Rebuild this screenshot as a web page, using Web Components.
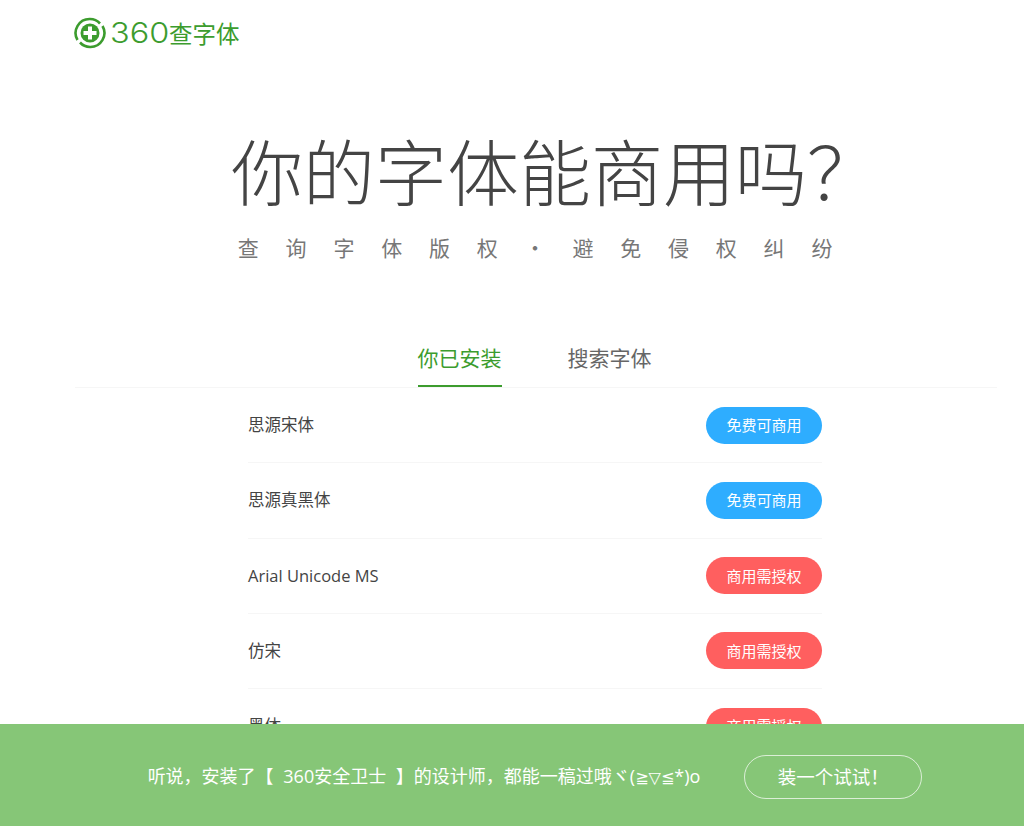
<!DOCTYPE html>
<html lang="zh">
<head>
<meta charset="utf-8">
<title>360查字体</title>
<style>
  html, body { margin: 0; height: 100%; overflow: hidden; background: #fff; }
  body { font-family: "Noto Sans CJK SC", "Liberation Sans", sans-serif; }
</style>
</head>
<body>
<font-app></font-app>

<script>
const FONT = `"Noto Sans CJK SC", "Liberation Sans", sans-serif`
const LATIN_FONT = `"Open Sans", ${FONT}`

class FontLogo extends HTMLElement {
  constructor() {
    super()
    this.attachShadow({ mode: 'open' }).innerHTML = `
      <style>
        :host { display: flex; align-items: center; color: #3c9c2e; height: 30px; }
        svg { width: 32px; height: 32px; flex: none; margin-right: 4px; }
        /* digits are wide in the logo, no installed font has them so stretch */
        .num { display: inline-block; width: 59px; font: 300 28px/30px Inter, sans-serif; transform: scaleX(1.160); transform-origin: left center; }
        .cn { font: 400 23.500px/30px ${FONT}; }
      </style>
      <svg viewBox="0 0 32 32">
        <path d="M3.500 23A14 14 0 0 1 16 2A14 14 0 0 1 26 6.500" fill="none" stroke="#3c9c2e" stroke-width="2.600"/>
        <path d="M28.500 9A14 14 0 0 1 16 30A14 14 0 0 1 6 25.500" fill="none" stroke="#3c9c2e" stroke-width="2.600"/>
        <circle cx="16" cy="16" r="9.500" fill="#3c9c2e"/>
        <path d="M14 9.500h4v4.500h4.500v4h-4.500v4.500h-4v-4.500h-4.500v-4h4.500z" fill="#fff"/>
      </svg>
      <span class="num">360</span><span class="cn">查字体</span>`
  }
}

class FontHero extends HTMLElement {
  constructor() {
    super()
    this.attachShadow({ mode: 'open' }).innerHTML = `
      <style>
        :host { display: flex; flex-direction: column; align-items: center; }
        h1 { margin: 0 0 0 86px; font: 300 72px/84px ${FONT}; color: #444; white-space: nowrap; }
        p { margin: 21px -27px 0 46px; font: 400 21px/30px ${FONT}; color: #777; letter-spacing: 26.800px; white-space: nowrap; }
      </style>
      <h1><slot name="title"></slot></h1>
      <p><slot name="sub"></slot></p>`
  }
}

class FontTabs extends HTMLElement {
  constructor() {
    super()
    this.attachShadow({ mode: 'open' }).innerHTML = `
      <style>
        :host { display: flex; justify-content: center; gap: 66px; margin: 0 27px 0 75px; padding-right: 3px; border-bottom: 1px solid #f6f6f6; }
      </style>
      <slot></slot>`
  }
}

class FontTab extends HTMLElement {
  constructor() {
    super()
    this.attachShadow({ mode: 'open' }).innerHTML = `
      <style>
        :host { display: block; font: 400 21px/30px ${FONT}; color: #666; padding: 0 0 13px; border-bottom: 2px solid transparent; }
        :host([active]) { color: #3c9c2e; border-bottom-color: #3c9c2e; }
      </style>
      <slot></slot>`
  }
}

class FontRow extends HTMLElement {
  constructor() {
    super()
    const free = this.getAttribute('status') === 'free'
    this.attachShadow({ mode: 'open' }).innerHTML = `
      <style>
        :host { display: flex; justify-content: space-between; align-items: center; height: 74.250px; border-bottom: 1px solid #f6f6f6; font: 400 16.500px/24px ${LATIN_FONT}; color: #444; }
        .pill { width: 116px; height: 37px; border-radius: 19px; display: flex; align-items: center; justify-content: center; font: 400 15px/24px ${FONT}; color: #fff; background: ${free ? '#2eadff' : '#ff5f5f'}; }
      </style>
      <span><slot></slot></span>
      <span class="pill">${free ? '免费可商用' : '商用需授权'}</span>`
  }
}

class FontBar extends HTMLElement {
  constructor() {
    super()
    this.attachShadow({ mode: 'open' }).innerHTML = `
      <style>
        :host { position: absolute; left: 0; right: 0; bottom: 0; height: 102px; box-sizing: border-box; padding: 4px 0 0 46px; background: #86c677; display: flex; align-items: center; justify-content: center; gap: 44px; color: #fff; font: 400 18px/26px ${LATIN_FONT}; word-spacing: 5px; }
        .btn { width: 176px; height: 42px; border: 1px solid rgba(255,255,255,.7); border-radius: 22px; display: flex; align-items: center; justify-content: center; }
      </style>
      <span><slot></slot></span>
      <span class="btn"><slot name="action"></slot></span>`
  }
}

class FontApp extends HTMLElement {
  constructor() {
    super()
    this.attachShadow({ mode: 'open' }).innerHTML = `
      <style>
        :host { display: block; height: 826px; overflow: hidden; position: relative; }
        header { padding: 18px 0 0 74px; }
        font-hero { margin-top: 79px; }
        font-tabs { margin-top: 80px; }
        .list { width: 574px; margin: 0 0 0 248px; }
        .kao { font-family: "DejaVu Sans", sans-serif; font-size: 16px; }
        .action { font-size: 18.500px; }
      </style>
      <header><font-logo></font-logo></header>
      <font-hero>
        <span slot="title">你的字体能商用吗？</span>
        <span slot="sub">查询字体版权·避免侵权纠纷</span>
      </font-hero>
      <font-tabs>
        <font-tab active>你已安装</font-tab>
        <font-tab>搜索字体</font-tab>
      </font-tabs>
      <div class="list">
        <font-row status="free">思源宋体</font-row>
        <font-row status="free">思源真黑体</font-row>
        <font-row status="paid">Arial Unicode MS</font-row>
        <font-row status="paid">仿宋</font-row>
        <font-row status="paid">黑体</font-row>
      </div>
      <font-bar>
        听说，安装了【 360安全卫士 】的设计师，都能一稿过哦ヾ(<span class="kao">≧▽≦</span>*)o
        <span slot="action" class="action">装一个试试！</span>
      </font-bar>`
  }
}

customElements.define('font-logo', FontLogo)
customElements.define('font-hero', FontHero)
customElements.define('font-tab', FontTab)
customElements.define('font-tabs', FontTabs)
customElements.define('font-row', FontRow)
customElements.define('font-bar', FontBar)
customElements.define('font-app', FontApp)
</script>
</body>
</html>
